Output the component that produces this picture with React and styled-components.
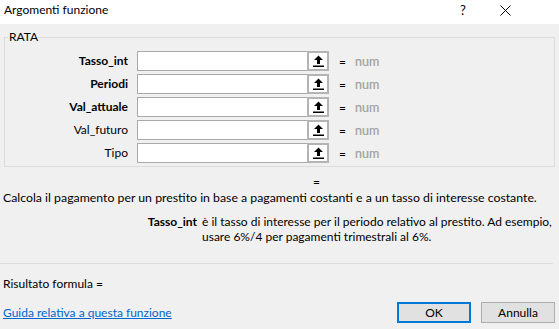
import React from 'react';
import styled, { createGlobalStyle } from 'styled-components';

const GlobalStyle = createGlobalStyle`
  html, body {
    margin: 0;
    padding: 0;
    background: #f0f0f0;
  }
  body {
    font-family: Lato, "Noto Sans", "Liberation Sans", sans-serif;
    font-size: 12px;
    color: #000;
  }
`;

const args = [
  { name: 'Tasso_int', required: true },
  { name: 'Periodi', required: true },
  { name: 'Val_attuale', required: true },
  { name: 'Val_futuro', required: false },
  { name: 'Tipo', required: false },
];

function App() {
  return (
    <>
      <GlobalStyle />
      <Window>
        <TitleBar>
          <Title>Argomenti funzione</Title>
          <TitleButtons>
            <HelpMark>?</HelpMark>
            <CloseMark>
              <svg width="11" height="11" viewBox="0 0 11 11">
                <path d="M0.5 0.5 L10.5 10.5 M10.5 0.5 L0.5 10.5" stroke="#000" strokeWidth="1" />
              </svg>
            </CloseMark>
          </TitleButtons>
        </TitleBar>

        <ArgsGroup>
          <Legend>RATA</Legend>
          <ArgsGrid>
            {args.map((a) => (
              <React.Fragment key={a.name}>
                <ArgLabel $bold={a.required}>{a.name}</ArgLabel>
                <RefField>
                  <TextBox />
                  <CollapseButton>
                    <svg width="11" height="12" viewBox="0 0 11 12">
                      <path d="M5.5 0.5 L10 5 L7 5 L7 9 L4 9 L4 5 L1 5 Z" fill="#000" />
                      <rect x="0" y="10.5" width="11" height="1.5" fill="#000" />
                    </svg>
                  </CollapseButton>
                </RefField>
                <Equals>=</Equals>
                <ValueHint>num</ValueHint>
              </React.Fragment>
            ))}
          </ArgsGrid>
        </ArgsGroup>

        <ResultEquals>=</ResultEquals>
        <Description>
          Calcola il pagamento per un prestito in base a pagamenti costanti e a un tasso di interesse costante.
        </Description>
        <ArgHelp>
          <ArgHelpName>Tasso_int</ArgHelpName>
          <ArgHelpText>
            è il tasso di interesse per il periodo relativo al prestito. Ad esempio,
            <br />
            usare 6%/4 per pagamenti trimestrali al 6%.
          </ArgHelpText>
        </ArgHelp>

        <Spacer />
        <Divider />
        <ResultLine>Risultato formula =</ResultLine>
        <Footer>
          <HelpLink href="#">Guida relativa a questa funzione</HelpLink>
          <Buttons>
            <DialogButton $default>OK</DialogButton>
            <DialogButton>Annulla</DialogButton>
          </Buttons>
        </Footer>
      </Window>
    </>
  );
}

export default App;

const Window = styled.div`
  width: 559px;
  height: 329px;
  display: flex;
  flex-direction: column;
  background: #f0f0f0;
  overflow: hidden;
`;

const TitleBar = styled.div`
  height: 24px;
  background: #fff;
  display: flex;
  align-items: center;
  justify-content: space-between;
  padding-left: 4px;
  flex-shrink: 0;
`;

const Title = styled.div`
  font-size: 12px;
  line-height: 16px;
  margin-top: -4px;
`;

const TitleButtons = styled.div`
  display: flex;
  align-items: center;
  margin-top: -4px;
  padding-right: 33px;
`;

const HelpMark = styled.div`
  width: 42px;
  text-align: center;
  font-size: 13px;
`;

const CloseMark = styled.div`
  width: 42px;
  display: flex;
  justify-content: center;
`;

const ArgsGroup = styled.fieldset`
  margin: 6px 4px 0 4px;
  padding: 7px 0 3px 0;
  border: 1px solid #dcdcdc;
  min-width: 0;
`;

const Legend = styled.legend`
  margin-left: 3px;
  padding: 0 1px;
  line-height: 14px;
  font-size: 12px;
`;

const ArgsGrid = styled.div`
  display: grid;
  grid-template-columns: 123px 192px 14px auto;
  justify-content: start;
  column-gap: 9px;
  row-gap: 3px;
  align-items: center;
`;

const ArgLabel = styled.div`
  text-align: right;
  font-weight: ${(p) => (p.$bold ? 700 : 400)};
  line-height: 20px;
`;

const RefField = styled.div`
  display: flex;
  height: 20px;
`;

const TextBox = styled.div`
  flex: 1;
  background: #fff;
  border: 1px solid #a9a9a9;
  border-right: none;
`;

const CollapseButton = styled.div`
  width: 22px;
  box-sizing: border-box;
  border: 2px solid #b4b4b4;
  background: #fff;
  display: flex;
  align-items: center;
  justify-content: center;
`;

const Equals = styled.div`
  margin-left: 1px;
`;

const ValueHint = styled.div`
  color: #a0a0a0;
  margin-left: -6px;
  font-size: 12.5px;
  -webkit-text-stroke: 0.2px #a0a0a0;
`;

const ResultEquals = styled.div`
  margin: 8px 0 0 313px;
  line-height: 14px;
`;

const Description = styled.div`
  margin: 1px 0 0 3px;
  line-height: 16px;
  font-size: 12.3px;
  white-space: nowrap;
`;

const ArgHelp = styled.div`
  display: grid;
  grid-template-columns: 197px 1fr;
  column-gap: 5px;
  margin-top: 8px;
  line-height: 15px;
`;

const ArgHelpName = styled.div`
  font-weight: 700;
  text-align: right;
`;

const ArgHelpText = styled.div`
  white-space: nowrap;
`;

const Spacer = styled.div`
  flex: 1;
`;

const Divider = styled.div`
  height: 1px;
  background: #dcdcdc;
  margin: 0 6px 0 0;
`;

const ResultLine = styled.div`
  margin: 12px 0 0 3px;
  line-height: 16px;
`;

const Footer = styled.div`
  display: flex;
  justify-content: space-between;
  align-items: center;
  padding: 10px 4px 6px 3px;
`;

const HelpLink = styled.a`
  color: #0066cc;
  text-decoration: underline;
`;

const Buttons = styled.div`
  display: flex;
  gap: 10px;
`;

const DialogButton = styled.button`
  width: 74px;
  height: 21px;
  box-sizing: border-box;
  font-family: inherit;
  font-size: 12px;
  color: #000;
  background: #e1e1e1;
  border: ${(p) => (p.$default ? '2px solid #0078d7' : '1px solid #adadad')};
  padding: 0;
`;
